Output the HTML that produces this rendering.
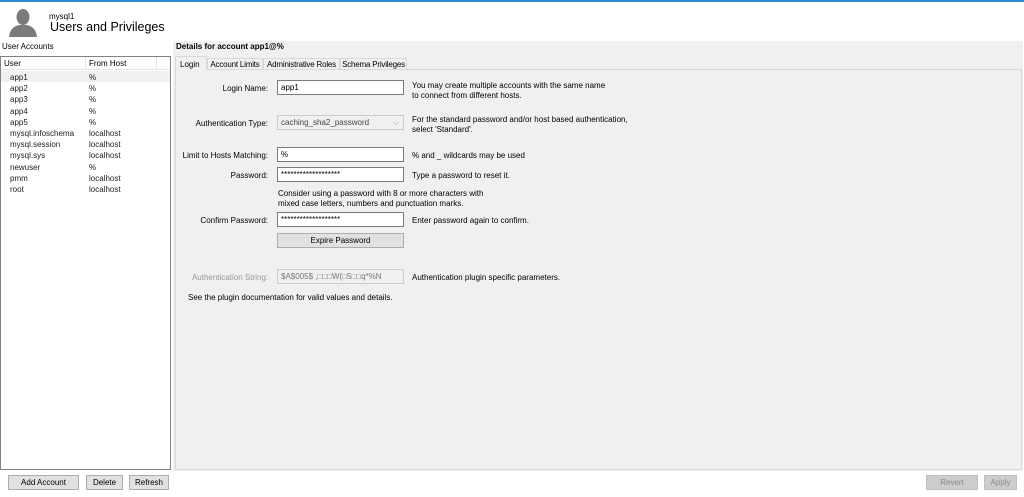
<!DOCTYPE html>
<html><head><style>
*{box-sizing:border-box;margin:0;padding:0}
body{width:1024px;height:497px;background:#fff;font-family:"Liberation Sans",sans-serif;font-size:8px;color:#000;position:relative;overflow:hidden}
.a{position:absolute;white-space:nowrap}
.inp{position:absolute;background:#fff;border:1px solid #7a7a7a;height:15px;padding:2px 3px;font-size:8px}
.btn{position:absolute;background:#e1e1e1;border:1px solid #adadad;height:15px;font-size:8px;text-align:center;line-height:13px}
.lbl{position:absolute;width:120px;text-align:right;left:148px}
.tab{position:absolute;top:58px;height:12px;background:#f0f0f0;border:1px solid #d9d9d9;padding:1px 0;text-align:center;letter-spacing:-0.2px}
</style></head><body>
<div class="a" style="left:0;top:0;width:1024px;height:2px;background:#2b8ad8"></div>
<svg class="a" style="left:8px;top:7px" width="30" height="30" viewBox="0 0 30 30"><ellipse cx="15" cy="10" rx="6.5" ry="8" fill="#7b7b7b"/><path d="M1 30 Q2 20 11 18 L19 18 Q28 20 29 30 Z" fill="#7b7b7b"/></svg>
<div class="a" style="left:49px;top:12px;font-size:8px">mysql1</div>
<div class="a" style="left:50px;top:20px;font-size:12.5px">Users and Privileges</div>
<div class="a" style="left:2px;top:42px">User Accounts</div>
<div class="a" style="left:0;top:56px;width:171px;height:414px;border:1px solid #828282;background:#fff"></div>
<div class="a" style="left:1px;top:57px;width:169px;height:13px;border-bottom:1px solid #e5e5e5"></div>
<div class="a" style="left:85px;top:57px;width:1px;height:13px;background:#e5e5e5"></div>
<div class="a" style="left:156px;top:57px;width:1px;height:13px;background:#e5e5e5"></div>
<div class="a" style="left:4px;top:59px">User</div><div class="a" style="left:89px;top:59px">From Host</div>
<div class="a" style="left:1px;top:71px;width:169px;height:11px;background:#f0f0f0"></div>
<div class="a" style="left:10px;top:72px;line-height:11.2px;color:#222">app1<br>app2<br>app3<br>app4<br>app5<br>mysql.infoschema<br>mysql.session<br>mysql.sys<br>newuser<br>pmm<br>root</div>
<div class="a" style="left:89px;top:72px;line-height:11.2px;color:#222">%<br>%<br>%<br>%<br>%<br>localhost<br>localhost<br>localhost<br>%<br>localhost<br>localhost</div>
<div class="a" style="left:173px;top:41px;width:850px;height:430px;background:#f0f0f0"></div>
<div class="a" style="left:176px;top:42px;font-weight:bold">Details for account app1@%</div>
<div class="a" style="left:175px;top:69px;width:847px;height:401px;border:1px solid #d9d9d9;background:#f0f0f0"></div>
<div class="a" style="left:175px;top:56px;width:32px;height:15px;background:#f0f0f0;border:1px solid #d9d9d9;border-bottom:none;padding:3px 4px">Login</div>
<div class="tab" style="left:207px;width:56px">Account Limits</div>
<div class="tab" style="left:263px;width:77px">Administrative Roles</div>
<div class="tab" style="left:340px;width:67px">Schema Privileges</div>
<div class="lbl" style="top:84px">Login Name:</div>
<div class="inp" style="left:277px;top:80px;width:127px">app1</div>
<div class="a" style="left:412px;top:81px;line-height:9.5px">You may create multiple accounts with the same name<br>to connect from different hosts.</div>
<div class="lbl" style="top:119px">Authentication Type:</div>
<div class="inp" style="left:277px;top:115px;width:127px;border-color:#ccc;background:#f0f0f0;color:#444">caching_sha2_password<span style="position:absolute;right:4px;color:#999">⌵</span></div>
<div class="a" style="left:412px;top:115px;line-height:9.5px">For the standard password and/or host based authentication,<br>select 'Standard'.</div>
<div class="lbl" style="top:151px">Limit to Hosts Matching:</div>
<div class="inp" style="left:277px;top:147px;width:127px">%</div>
<div class="a" style="left:412px;top:151px">% and _ wildcards may be used</div>
<div class="lbl" style="top:171px">Password:</div>
<div class="inp" style="left:277px;top:167px;width:127px">*******************</div>
<div class="a" style="left:412px;top:171px">Type a password to reset it.</div>
<div class="a" style="left:278px;top:189px;line-height:9.5px">Consider using a password with 8 or more characters with<br>mixed case letters, numbers and punctuation marks.</div>
<div class="lbl" style="top:216px">Confirm Password:</div>
<div class="inp" style="left:277px;top:212px;width:127px">*******************</div>
<div class="a" style="left:412px;top:216px">Enter password again to confirm.</div>
<div class="btn" style="left:277px;top:233px;width:127px">Expire Password</div>
<div class="lbl" style="top:273px;color:#999">Authentication String:</div>
<div class="inp" style="left:277px;top:269px;width:127px;border-color:#ccc;background:#f0f0f0;color:#777;overflow:hidden">$A$005$ ,□□□W(□5□□q*%N</div>
<div class="a" style="left:412px;top:273px">Authentication plugin specific parameters.</div>
<div class="a" style="left:188px;top:293px">See the plugin documentation for valid values and details.</div>
<div class="btn" style="left:8px;top:475px;width:71px">Add Account</div>
<div class="btn" style="left:86px;top:475px;width:37px">Delete</div>
<div class="btn" style="left:129px;top:475px;width:40px">Refresh</div>
<div class="btn" style="left:926px;top:475px;width:52px;background:#ccc;border-color:#bfbfbf;color:#888">Revert</div>
<div class="btn" style="left:984px;top:475px;width:33px;background:#ccc;border-color:#bfbfbf;color:#888">Apply</div>
</body></html>
